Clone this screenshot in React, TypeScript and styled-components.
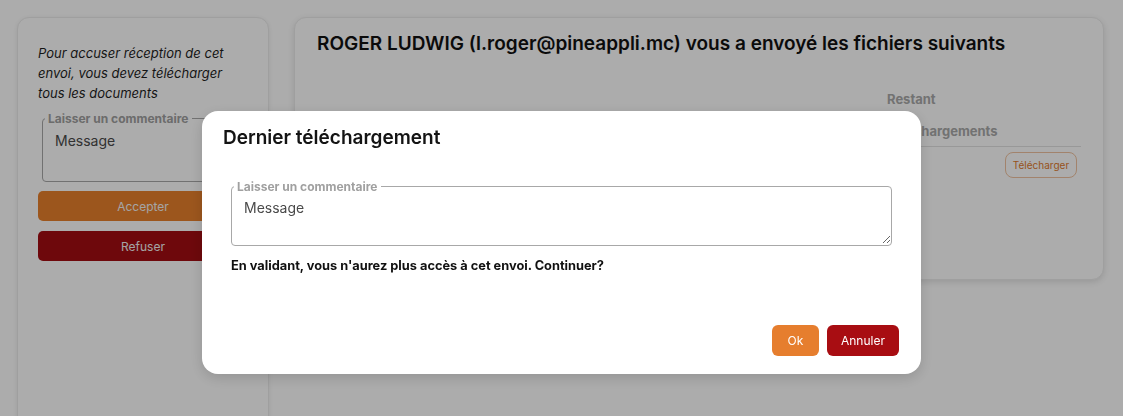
import React from "react";
import styled, { createGlobalStyle } from "styled-components";

const GlobalStyle = createGlobalStyle`
  html, body { margin: 0; padding: 0; background: #ffffff; }
  body { font-family: Inter, "Noto Sans", "Liberation Sans", sans-serif; color: #1a1a1a; }
  * { box-sizing: border-box; }
`;

const Page = styled.div`
  display: flex;
  align-items: flex-start;
  gap: 25px;
  padding: 17px 19px 0 17px;
  height: 416px;
  overflow: hidden;
`;

const SideCard = styled.aside`
  flex: none;
  width: 252px;
  min-height: 460px;
  padding: 25px 20px;
  border-radius: 12px;
  background: #fff;
  border: 1px solid #ececec;
  box-shadow: 0 1px 4px rgba(0, 0, 0, 0.08);
  display: flex;
  flex-direction: column;
`;

const Notice = styled.p`
  margin: 0;
  font-size: 13px;
  line-height: 20px;
  font-style: italic;
  color: #1f1f1f;
`;

const Field = styled.fieldset<{ $mt?: number; $mx?: number }>`
  margin: ${(p) => p.$mt ?? 0}px ${(p) => p.$mx ?? 0}px 0 ${(p) => p.$mx ?? 0}px;
  padding: 0 0 1px 0;
  border: 1px solid #a8a8a8;
  border-radius: 4px;
  min-width: 0;
`;

const FieldLegend = styled.legend`
  margin-left: 2px;
  padding: 0 4px 0 3px;
  font-size: 12px;
  line-height: 15px;
  font-weight: 700;
  color: #a0a0a0;
`;

const MessageInput = styled.textarea<{ $h: number; $pt: number }>`
  display: block;
  width: 100%;
  height: ${(p) => p.$h}px;
  padding: ${(p) => p.$pt}px 12px 0 12px;
  border: none;
  outline: none;
  background: transparent;
  resize: vertical;
  font-family: inherit;
  font-size: 14px;
  line-height: 20px;
  color: #444;
  &::placeholder { color: #4a4a4a; opacity: 1; }
`;

const WideButton = styled.button<{ $tone: "accept" | "refuse"; $mt: number }>`
  margin-top: ${(p) => p.$mt}px;
  width: 100%;
  height: 30px;
  border: none;
  border-radius: 5px;
  background: ${(p) => (p.$tone === "accept" ? "#e8802c" : "#a30d12")};
  color: #f4f4f4;
  font-family: inherit;
  font-size: 12px;
`;

const MainCard = styled.section`
  flex: 1;
  height: 263px;
  padding: 13px 22px;
  border-radius: 12px;
  background: #fff;
  border: 1px solid #ececec;
  box-shadow: 0 2px 6px rgba(0, 0, 0, 0.12);
`;

const MainTitle = styled.h1`
  margin: 0;
  font-size: 19px;
  line-height: 26px;
  font-weight: 600;
  color: #111;
`;

const FileGrid = styled.div`
  margin-top: 33px;
  display: grid;
  grid-template-columns: 1fr 118px 76px;
`;

const HeadCell = styled.div`
  padding-bottom: 6px;
  border-bottom: 1px solid #e2e2e2;
  display: flex;
  flex-direction: column;
  gap: 14px;
  font-size: 13px;
  line-height: 18px;
  font-weight: 700;
  color: #a9a9a9;
`;

const BodyCell = styled.div`
  padding-top: 5px;
  height: 40px;
`;

const OutlineButton = styled.button`
  width: 72px;
  height: 26px;
  padding: 0;
  border: 1px solid #f1c3a0;
  border-radius: 8px;
  background: #fff;
  color: #e07a2c;
  font-family: inherit;
  font-size: 10px;
`;

const Overlay = styled.div`
  position: fixed;
  inset: 0;
  background: rgba(0, 0, 0, 0.325);
  display: flex;
  justify-content: center;
  align-items: flex-start;
  padding-top: 111px;
`;

const Dialog = styled.div`
  width: 719px;
  background: #fff;
  border-radius: 16px;
  box-shadow: 0 4px 14px rgba(0, 0, 0, 0.15);
  padding: 13px 0 18px 0;
`;

const DialogTitle = styled.h2`
  margin: 0;
  padding: 0 21px;
  font-size: 19px;
  line-height: 28px;
  font-weight: 600;
  color: #141414;
`;

const DialogBody = styled.div`
  padding: 0 29px;
  margin-top: 27px;
`;

const Warning = styled.p`
  margin: 11px 0 0 0;
  font-size: 12.8px;
  line-height: 18px;
  font-weight: 700;
  color: #111;
`;

const Actions = styled.div`
  margin-top: 50px;
  padding: 0 22px;
  display: flex;
  justify-content: flex-end;
  gap: 8px;
`;

const DialogButton = styled.button<{ $tone: "ok" | "cancel" }>`
  height: 31px;
  padding: 0;
  width: ${(p) => (p.$tone === "ok" ? 47 : 72)}px;
  border: none;
  border-radius: 6px;
  background: ${(p) => (p.$tone === "ok" ? "#e67e2e" : "#a80d12")};
  color: #fff;
  font-family: inherit;
  font-size: 12px;
`;

export default function App() {
  return (
    <>
      <GlobalStyle />
      <Page>
        <SideCard>
          <Notice>Pour accuser réception de cet envoi, vous devez télécharger tous les documents</Notice>
          <Field $mt={8} $mx={4}>
            <FieldLegend>Laisser un commentaire</FieldLegend>
            <MessageInput $h={54} $pt={5} placeholder="Message" />
          </Field>
          <WideButton $tone="accept" $mt={9}>Accepter</WideButton>
          <WideButton $tone="refuse" $mt={10}>Refuser</WideButton>
        </SideCard>
        <MainCard>
          <MainTitle>ROGER LUDWIG (l.roger@pineappli.mc) vous a envoyé les fichiers suivants</MainTitle>
          <FileGrid>
            <HeadCell />
            <HeadCell>
              <span>Restant</span>
              <span>Téléchargements</span>
            </HeadCell>
            <HeadCell />
            <BodyCell />
            <BodyCell />
            <BodyCell>
              <OutlineButton>Télécharger</OutlineButton>
            </BodyCell>
          </FileGrid>
        </MainCard>
      </Page>
      <Overlay>
        <Dialog>
          <DialogTitle>Dernier téléchargement</DialogTitle>
          <DialogBody>
            <Field>
              <FieldLegend>Laisser un commentaire</FieldLegend>
              <MessageInput $h={50} $pt={4} placeholder="Message" />
            </Field>
            <Warning>En validant, vous n'aurez plus accès à cet envoi. Continuer?</Warning>
          </DialogBody>
          <Actions>
            <DialogButton $tone="ok">Ok</DialogButton>
            <DialogButton $tone="cancel">Annuler</DialogButton>
          </Actions>
        </Dialog>
      </Overlay>
    </>
  );
}
